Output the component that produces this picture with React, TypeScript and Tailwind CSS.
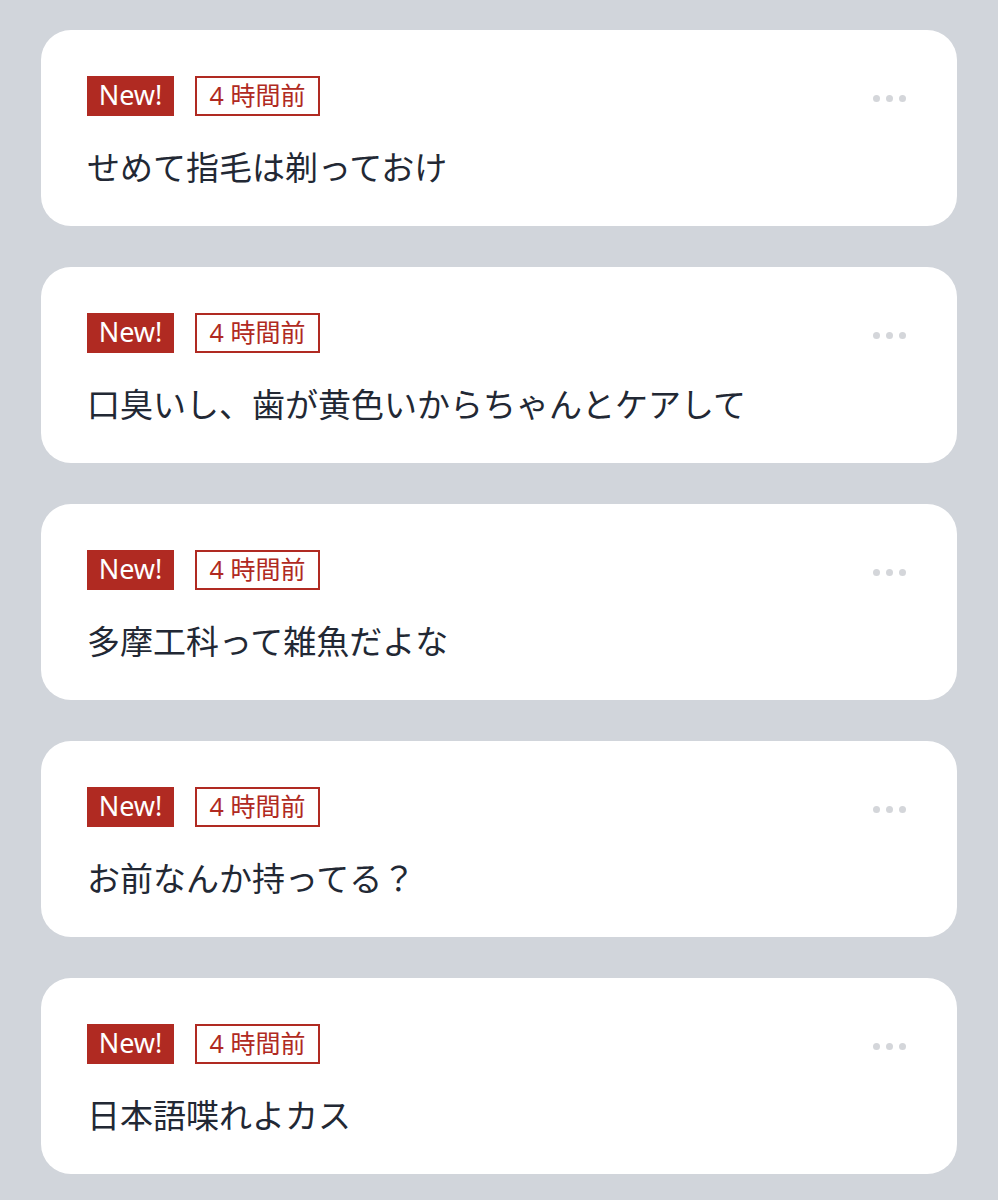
const messages = [
  "せめて指毛は剃っておけ",
  "口臭いし、歯が黄色いからちゃんとケアして",
  "多摩工科って雑魚だよな",
  "お前なんか持ってる？",
  "日本語喋れよカス",
];

function MoreDots() {
  return (
    <div className="flex items-center gap-[6px]">
      <span className="h-[7px] w-[7px] rounded-full bg-[#d4d6da]" />
      <span className="h-[7px] w-[7px] rounded-full bg-[#d4d6da]" />
      <span className="h-[7px] w-[7px] rounded-full bg-[#d4d6da]" />
    </div>
  );
}

function MessageCard({ text }: { text: string }) {
  return (
    <div className="h-[196px] rounded-[30px] bg-white pl-[46px] pr-[51px] pt-[46px]">
      <div className="flex h-[40px] items-center">
        <span className="flex h-[40px] w-[87px] items-center justify-center bg-[#b02a22] pb-[3px] text-[27px] leading-none text-white">
          New!
        </span>
        <span className="ml-[21px] flex h-[40px] w-[125px] items-center justify-center border-2 border-[#b02a22] pb-[1px] text-[25px] leading-none text-[#b02a22]">
          4 時間前
        </span>
        <div className="ml-auto pt-[4px]">
          <MoreDots />
        </div>
      </div>
      <p className="mt-[31px] text-[33px] leading-[42px] text-[#222834]">{text}</p>
    </div>
  );
}

export default function App() {
  return (
    <div
      className="min-h-[1200px] bg-[#d1d5db] px-[41px] pt-[30px]"
      style={{ fontFamily: '"Noto Sans", "Noto Sans CJK JP", sans-serif' }}
    >
      <div className="flex flex-col gap-[41px]">
        {messages.map((m, i) => (
          <MessageCard key={i} text={m} />
        ))}
      </div>
    </div>
  );
}
